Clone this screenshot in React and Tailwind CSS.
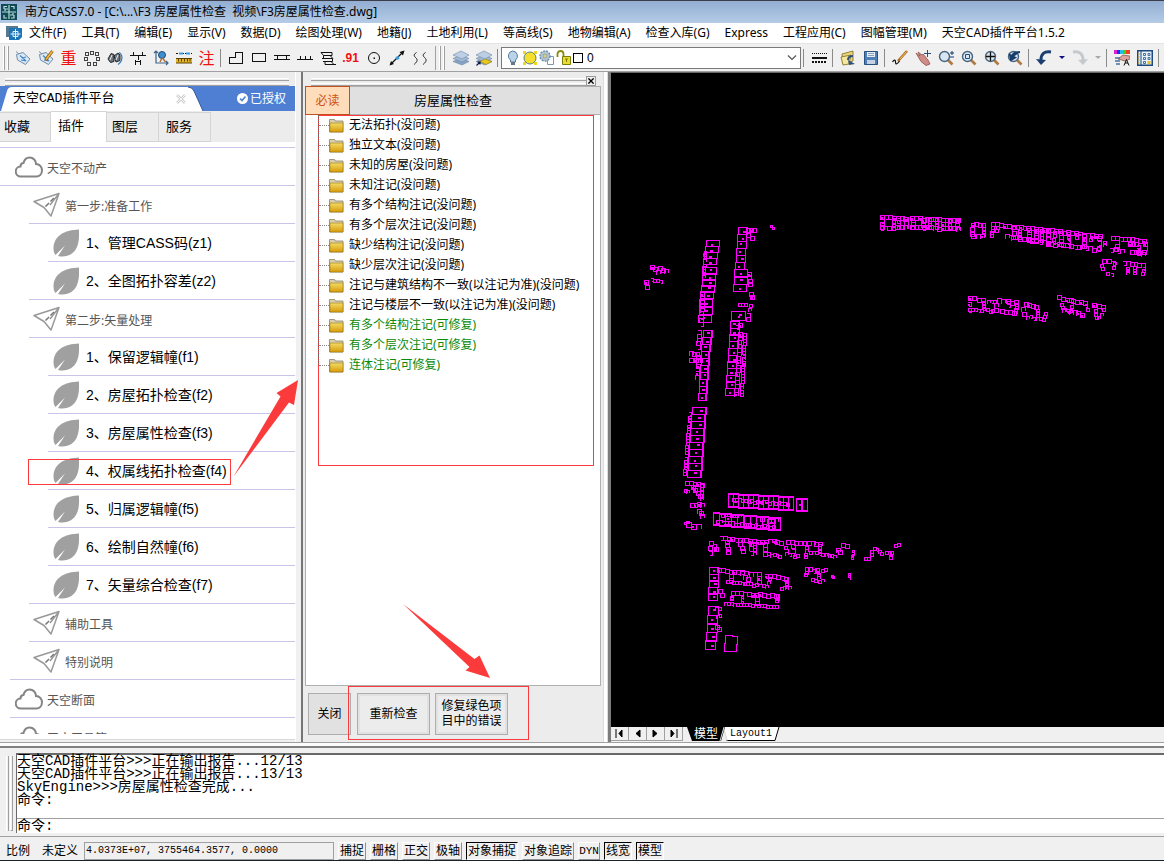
import React from "react";

/* ---------- Menu, tree and plug-in data ---------- */

const MENUS = [
  "文件(F)", "工具(T)", "编辑(E)", "显示(V)", "数据(D)", "绘图处理(W)", "地籍(J)", "土地利用(L)",
  "等高线(S)", "地物编辑(A)", "检查入库(G)", "Express", "工程应用(C)", "图幅管理(M)", "天空CAD插件平台1.5.2",
];

const CHECKS = [
  ["无法拓扑(没问题)", false],
  ["独立文本(没问题)", false],
  ["未知的房屋(没问题)", false],
  ["未知注记(没问题)", false],
  ["有多个结构注记(没问题)", false],
  ["有多个层次注记(没问题)", false],
  ["缺少结构注记(没问题)", false],
  ["缺少层次注记(没问题)", false],
  ["注记与建筑结构不一致(以注记为准)(没问题)", false],
  ["注记与楼层不一致(以注记为准)(没问题)", false],
  ["有多个结构注记(可修复)", true],
  ["有多个层次注记(可修复)", true],
  ["连体注记(可修复)", true],
];

const LINE0 = "h-px bg-[#c8c5e8]";
const LINE10 = "h-px bg-[#c8c5e8] ml-[10px]";
const LINE29 = "h-px bg-[#c8c5e8] ml-[29px]";
const LINE48 = "h-px bg-[#c8c5e8] ml-[48px]";

const PLUGINS = [
  ["cloud", "天空不动产", LINE0],
  ["plane", "第一步:准备工作", LINE29],
  ["leaf", "1、管理CASS码(z1)", LINE48],
  ["leaf", "2、全图拓扑容差(z2)", LINE29],
  ["plane", "第二步:矢量处理", LINE29],
  ["leaf", "1、保留逻辑幢(f1)", LINE48],
  ["leaf", "2、房屋拓扑检查(f2)", LINE48],
  ["leaf", "3、房屋属性检查(f3)", LINE48],
  ["leaf", "4、权属线拓扑检查(f4)", LINE48, true],
  ["leaf", "5、归属逻辑幢(f5)", LINE48],
  ["leaf", "6、绘制自然幢(f6)", LINE48],
  ["leaf", "7、矢量综合检查(f7)", LINE29],
  ["plane", "辅助工具", LINE29],
  ["plane", "特别说明", LINE10],
  ["cloud", "天空断面", LINE10],
  ["cloud", "天空工具箱", LINE10],
];

/* ---------- Site plan geometry ---------- */

let seed = 7;
const rnd = () => {
  seed = (seed * 16807) % 2147483647;
  return seed / 2147483647;
};

const rect = (x, y, w, h) => `M${x} ${y}h${w}v${h}h${-w}z`;
const dot = (x, y, w = 2, h = 2) => rect(x, y, w, h);

// Long blocks cut in parcels: [x1, y1, x2, y2, cellWidth, cellHeight, doubleWall]
const BLOCKS = [
  [706, 240, 703, 258, 13, 6, false],
  [703, 267, 701, 285, 13, 7, false],
  [700, 291, 698, 315, 13, 7, false],
  [703, 330, 701, 344, 9, 7, true],
  [701, 351, 698, 393, 8, 7, true],
  [692, 407, 687, 470, 14, 7, true],
  [738, 227, 735, 262, 9, 7, false],
  [734, 269, 733, 284, 13, 7, false],
  [731, 311, 731, 311, 14, 9, false],
  [730, 321, 725, 388, 9, 7, false],
  [728, 493, 788, 496, 5, 14, true],
  [796, 498, 802, 498, 5, 13, true],
  [713, 512, 774, 517, 6, 13, true],
  [708, 606, 705, 640, 10, 9, false],
  [709, 567, 708, 593, 9, 7, false],
];

// Chains of small outbuildings: [x1, y1, x2, y2, size]
const CHAINS = [
  [703, 250, 702, 275, 3], [700, 292, 699, 322, 4], [697, 330, 696, 345, 4], [689, 351, 695, 352, 4],
  [689, 358, 698, 358, 4], [696, 355, 695, 375, 4],
  [688, 412, 683, 472, 3], [685, 481, 700, 482, 4], [691, 485, 698, 494, 4], [684, 489, 686, 489, 3],
  [690, 503, 700, 502, 4], [697, 508, 700, 514, 4], [684, 521, 687, 521, 2], [686, 522, 696, 523, 5], [700, 484, 700, 497, 3],
  [746, 228, 752, 228, 4], [746, 233, 750, 236, 4], [747, 272, 748, 282, 4], [749, 292, 750, 295, 4],
  [738, 303, 744, 303, 3], [749, 304, 748, 308, 3], [746, 313, 746, 317, 4], [738, 322, 735, 325, 4],
  [738, 332, 734, 392, 4], [743, 333, 740, 392, 3],
  [650, 265, 656, 269, 4], [658, 266, 664, 269, 4], [644, 280, 645, 284, 4], [650, 278, 659, 280, 3], [770, 225, 772, 227, 2],
  [880, 215, 904, 216, 4], [879, 226, 903, 225, 4], [880, 219, 880, 225, 4], [892, 217, 892, 226, 3], [897, 217, 897, 226, 3], [903, 217, 904, 225, 4],
  [910, 216, 956, 218, 4], [910, 225, 956, 226, 4], [911, 219, 911, 225, 4], [921, 218, 921, 226, 4], [928, 218, 928, 226, 3],
  [935, 218, 935, 226, 3], [941, 218, 941, 226, 4], [948, 219, 948, 226, 3], [955, 219, 955, 226, 4],
  [971, 222, 981, 223, 4], [971, 234, 980, 234, 4], [970, 227, 970, 232, 4], [982, 227, 982, 232, 3],
  [991, 222, 1046, 228, 4], [1046, 228, 1098, 234, 4], [1005, 234, 1030, 238, 4], [1030, 239, 1096, 247, 4],
  [991, 226, 990, 234, 3], [996, 226, 995, 229, 3], [1012, 226, 1011, 235, 4], [1018, 226, 1018, 235, 3], [1027, 227, 1027, 237, 4],
  [1034, 228, 1034, 238, 4], [1040, 229, 1040, 239, 3], [1046, 229, 1046, 240, 4], [1053, 231, 1052, 241, 3], [1059, 231, 1059, 242, 4],
  [1067, 232, 1067, 243, 3], [1075, 233, 1075, 236, 3], [1082, 234, 1082, 244, 4], [1089, 235, 1089, 238, 3], [1097, 236, 1097, 245, 4], [1103, 240, 1103, 243, 3],
  [1111, 236, 1142, 238, 4], [1115, 240, 1114, 247, 4], [1109, 248, 1120, 249, 4], [1128, 242, 1134, 242, 4], [1136, 244, 1136, 250, 4], [1143, 242, 1142, 250, 4], [1130, 250, 1141, 251, 4],
  [1102, 258, 1111, 260, 4], [1100, 264, 1101, 267, 3], [1113, 262, 1112, 266, 3], [1106, 272, 1110, 273, 3],
  [1122, 261, 1141, 263, 4], [1126, 266, 1126, 271, 3], [1133, 266, 1133, 271, 3], [1142, 266, 1141, 272, 3],
  [968, 296, 981, 297, 4], [967, 302, 967, 307, 4], [968, 308, 980, 308, 3], [982, 301, 982, 307, 3], [987, 299, 993, 300, 3], [986, 308, 991, 309, 3],
  [997, 298, 1014, 300, 4], [994, 303, 994, 308, 4], [1000, 309, 1012, 311, 4], [1007, 301, 1007, 304, 3], [1015, 303, 1014, 311, 3],
  [1024, 302, 1034, 305, 4], [1021, 307, 1022, 312, 4], [1026, 315, 1042, 317, 3], [1036, 308, 1036, 314, 3], [1044, 312, 1043, 315, 3],
  [1057, 295, 1069, 298, 4], [1071, 299, 1083, 301, 4], [1060, 303, 1062, 308, 3], [1062, 308, 1080, 312, 4], [1070, 302, 1069, 308, 3], [1084, 304, 1086, 307, 3],
  [1092, 303, 1101, 305, 4], [1094, 309, 1094, 313, 3], [1102, 308, 1100, 312, 3], [1095, 315, 1097, 316, 3],
  [732, 498, 786, 502, 3], [721, 513, 738, 514, 3], [760, 517, 774, 518, 4], [716, 520, 772, 525, 3],
  [709, 541, 714, 547, 4], [708, 546, 708, 551, 4], [719, 536, 738, 538, 4], [740, 538, 764, 540, 4], [768, 539, 779, 540, 4],
  [725, 540, 726, 550, 4], [738, 542, 741, 549, 4], [749, 542, 749, 550, 4], [753, 542, 753, 551, 3], [763, 542, 763, 551, 4], [767, 552, 778, 554, 3],
  [786, 540, 802, 541, 4], [803, 541, 818, 541, 4], [784, 546, 785, 549, 3], [791, 544, 791, 548, 4], [785, 552, 796, 554, 3],
  [805, 546, 804, 555, 3], [809, 551, 824, 552, 3], [825, 553, 833, 555, 3], [818, 543, 818, 549, 3], [836, 548, 838, 550, 4], [841, 542, 845, 544, 4],
  [852, 550, 851, 557, 2], [864, 557, 867, 557, 3], [870, 550, 870, 553, 3], [873, 546, 880, 551, 3], [885, 551, 890, 551, 3], [889, 554, 889, 556, 3], [894, 544, 897, 543, 3],
  [717, 568, 740, 570, 4], [740, 570, 757, 572, 4], [729, 574, 729, 578, 4], [743, 575, 746, 577, 4], [757, 576, 757, 579, 4], [726, 580, 755, 583, 3],
  [764, 573, 784, 576, 4], [768, 577, 767, 581, 3], [762, 584, 765, 585, 3], [784, 577, 785, 582, 3], [780, 586, 788, 586, 3],
  [805, 567, 815, 568, 4], [805, 571, 804, 573, 3], [821, 568, 824, 568, 3], [816, 570, 817, 576, 3], [811, 578, 821, 579, 3], [831, 574, 832, 576, 2], [848, 573, 848, 576, 2],
  [731, 591, 774, 593, 4], [730, 596, 730, 597, 3], [741, 596, 741, 600, 2], [755, 597, 755, 600, 4], [776, 594, 775, 599, 3],
  [724, 602, 775, 605, 3], [715, 607, 718, 607, 3], [716, 614, 718, 614, 3], [715, 625, 717, 627, 4], [718, 589, 720, 593, 4],
];

function buildPlan() {
  let outline = "";
  let solid = "";
  for (const [x1, y1, x2, y2, w, h, double] of BLOCKS) {
    const vertical = Math.abs(y2 - y1) >= Math.abs(x2 - x1);
    const n = Math.max(1, Math.round(Math.hypot(x2 - x1, y2 - y1) / (vertical ? h : w)));
    for (let i = 0; i <= n; i++) {
      const x = Math.round(x1 + ((x2 - x1) * i) / n);
      const y = Math.round(y1 + ((y2 - y1) * i) / n);
      outline += rect(x, y, w, h);
      if (double && vertical) solid += dot(x + w - 1, y, 1, h);
      if (double && !vertical) solid += dot(x, y + 1, w, 1) + dot(x, y + h - 1, w, 1);
      const dx = x + Math.floor(w / 2) + Math.floor(rnd() * 3) - 1;
      const dy = y + Math.floor(h / 2) + Math.floor(rnd() * 3) - 1;
      if (vertical || rnd() > 0.5) solid += dot(dx, dy, rnd() > 0.5 ? 3 : 2, 2);
    }
  }
  for (const [x1, y1, x2, y2, s] of CHAINS) {
    const len = Math.hypot(x2 - x1, y2 - y1);
    const n = Math.max(1, Math.round(len / s));
    for (let i = 0; i <= n; i++) {
      const x = Math.round(x1 + ((x2 - x1) * i) / n);
      const y = Math.round(y1 + ((y2 - y1) * i) / n + (rnd() > 0.8 ? 1 : 0));
      const r = rnd();
      if (r < 0.66) outline += rect(x, y, s, s);
      else if (r < 0.86) outline += `M${x} ${y + s}v${-s}h${s}v${s - 1}`;
      else outline += `M${x} ${y}h${s}v${s}h${-s + 1}`;
      if (s > 3 && rnd() > 0.8) solid += dot(x + 1, y + 2, 2, 2);
    }
  }
  outline += "M725 635h7v1h5v8h-1v7h-12v-8h1z";
  return [outline, solid];
}

const [PLAN_OUTLINE, PLAN_SOLID] = buildPlan();

/* ---------- Icons ---------- */

function Svg({ children, size = "size-4", box = "0 0 16 16" }) {
  return (
    <svg viewBox={box} className={`${size} shrink-0`} fill="none" aria-hidden="true">
      {children}
    </svg>
  );
}

const Tag = () => (
  <g>
    <path d="M1 1.500 4 4" stroke="#7a8aa0" />
    <path d="M1.500 4.500 8 2.500 15 9 10.500 14.500 2.500 10z" fill="#dce8f4" stroke="#6e8cae" />
    <path d="M5 5.500 11 11M7 8l4-1M6 10l5 1" stroke="#3f88c8" strokeWidth="1.200" />
  </g>
);

const Lens = ({ children }) => (
  <g>
    <path d="M10 10 14.500 14.500" stroke="#b07a40" strokeWidth="2.600" />
    <circle cx="6.500" cy="6.500" r="5" fill="#d7e6f2" stroke="#4a647c" strokeWidth="1.400" />
    {children}
  </g>
);

const Layers = () => (
  <g stroke="#7088a8" strokeWidth=".6">
    <path d="M0 11.500 8 8l8 3.500L9 15z" fill="#86a2c4" />
    <path d="M0 8.500 8 5l8 3.500L9 12z" fill="#a0bad6" />
    <path d="M0 5 8 1l8 4-7 4z" fill="#bccfe4" />
  </g>
);

const ICONS = {
  tag: <Tag />,
  tagEdit: (
    <g>
      <Tag />
      <path d="M14.500 1 7.500 10" stroke="#8a5a20" strokeWidth="3" />
      <path d="M14.500 1 8 9.500" stroke="#f0b840" strokeWidth="1.600" />
    </g>
  ),
  nodes: (
    <path d="M6.500 1.500h3v3h-3zM1.500 2.500h3v3h-3zM11.500 2.500h3v3h-3zM.5 7.500h3v3h-3zM12.500 7.500h3v3h-3zM3.500 12.500h3v3h-3zM9.500 12.500h3v3h-3z" stroke="#444" shapeRendering="crispEdges" />
  ),
  binoculars: (
    <g>
      <path d="M1 9 4 3.500l3 1v7l-3.500 1zM7 6l4-3 2 2v5.500L9 12z" fill="#6d767d" stroke="#22282d" />
      <path d="M12 2.500c4 2 4 8.500-1 12" stroke="#3f7cb8" strokeWidth="1.300" />
      <path d="M3 10 5 5M9 10l2-5" stroke="#e8ecef" />
    </g>
  ),
  ditch: <path d="M0 5.500h16M3.500 2v3M12.500 2v3M8.500 6v4M5.500 15V9.500M10.500 15V9.500M5.500 11.500h5" stroke="#111" shapeRendering="crispEdges" />,
  axes: (
    <g>
      <path d="M3 1v12h12M1 3l2-2 2 2M13 11l2 2-2 2" stroke="#39648f" strokeWidth="1.200" />
      <circle cx="9" cy="5" r="3.500" fill="#3f8fd0" stroke="#1f4a74" />
      <path d="m9 8-2 4M9.500 8l3 4" stroke="#b06a30" strokeWidth="1.400" />
    </g>
  ),
  ruler: (
    <g>
      <path d="M0 3.500h16" stroke="#111" strokeDasharray="2 1" />
      <path d="M3 3.500h4M10 3.500h4" stroke="#3c9be0" strokeWidth="2" />
      <path d="M0 8h16v5H0z" fill="#e3b52a" />
      <path d="M0 8.500h16M0 13h16M2.500 9v2.500M5.500 9v2.500M8.500 9v2.500M11.500 9v2.500M14 9v2.500" stroke="#5c4300" />
    </g>
  ),
  poly: <path d="M1.500 13.500v-6h6v-5h7v11z" stroke="#111" shapeRendering="crispEdges" />,
  box: <path d="M1.500 3.500h13v8h-13z" stroke="#111" shapeRendering="crispEdges" />,
  fence: <path d="M0 5.500h16M0 9.500h16M3.500 5v4M12.500 5v4" stroke="#111" shapeRendering="crispEdges" />,
  slope: <path d="M0 9.500h16M3.500 6v3M8.500 6v3M13.500 6v3" stroke="#111" shapeRendering="crispEdges" />,
  contour: <path d="M1 2.500h11v3H3.500v3h9v3H5v3h11M10 5.500l3 3M11 11.500l3 3M1 2.500l2.500 3M2 8.500h2M3 11.500h2" stroke="#111" />,
  circle: (
    <g>
      <circle cx="8" cy="8" r="5.500" stroke="#111" />
      <path d="M7.500 7.500h1.500v1.500H7.500z" fill="#111" />
    </g>
  ),
  dimension: (
    <g>
      <path d="M1.500 14.500 14.500 1.500" stroke="#111" strokeWidth="1.300" />
      <path d="m15.500.5-5 1.500L14 5.500zM.5 15.500 2 11l3 3z" fill="#111" />
      <path d="m6.500 7 3-1 1 3-3 1z" fill="#3c9be0" />
    </g>
  ),
  waves: <path d="M4.500 2.500c-4 2.500-2 4 0 6 1.500 2 0 4-2.500 6M13.500 2.500c-4 2.500-2 4 0 6 1.500 2 0 4-2.500 6" stroke="#222" />,
  layers: <Layers />,
  layerPrev: (
    <g>
      <Layers />
      <path d="M4 11.500 9 9l7 2.500-6 3z" fill="#e8c81c" stroke="#9a8408" strokeWidth=".6" />
      <path d="M.5 15.500 4 12M1.500 12H4v2.500" stroke="#0a1a4a" strokeWidth="1.200" />
    </g>
  ),
  lineStyle: (
    <g stroke="#111">
      <path d="M1 3.500h15" strokeDasharray="1 1" />
      <path d="M1 8h15" strokeWidth="2" />
      <path d="M1 12h15" strokeWidth="2" strokeDasharray="2 1" />
    </g>
  ),
  open: (
    <g>
      <path d="M2 4 13 1v10L3 14z" fill="#e9d67c" stroke="#958032" />
      <path d="m1 7 10-2-2 9-6 1z" fill="#f4e7a0" stroke="#958032" />
      <path d="M13 6C9 6 8 8 8 10" stroke="#2d4f7c" strokeWidth="2" />
      <path d="m8 10 1 5 6-1z" fill="#2d4f7c" />
    </g>
  ),
  save: (
    <g>
      <path d="M1.500 1.500h13v13h-13z" fill="#4f7fb8" stroke="#2b517e" />
      <path d="M4 2h8v5H4z" fill="#e6eef6" />
      <path d="M4 10h8v4H4z" fill="#c4d2e2" />
      <path d="M5 3.500h6M5 5.500h6" stroke="#8aa0b8" />
    </g>
  ),
  brush: (
    <g>
      <path d="M15 1 6 11" stroke="#b06a20" strokeWidth="2.600" />
      <path d="M14.500 1.500 8 9" stroke="#f2c060" />
      <path d="M.5 12c1-2 3-3 3 0 0 3 2 2 4-1" stroke="#111" strokeWidth="1.200" />
    </g>
  ),
  pan: (
    <g>
      <path d="M1 3 5 6 3 2l4 3 1-1 5 6 2 4-4 1.500-5-4z" fill="#d08c86" stroke="#8e504c" strokeWidth=".8" />
      <path d="M12.500 0v7M9 3.500h7" stroke="#234f80" />
    </g>
  ),
  zoomPm: (
    <g>
      <Lens />
      <path d="M12 3h4M14 1v4M12 7h4" stroke="#123c70" />
    </g>
  ),
  zoomWin: (
    <Lens>
      <path d="M4.500 4.500h4v4h-4z" stroke="#234f80" />
    </Lens>
  ),
  zoomExt: (
    <Lens>
      <path d="M6.500 2v9M2 6.500h9" stroke="#111" strokeWidth="1.300" />
    </Lens>
  ),
  zoomPrev: (
    <g>
      <Lens />
      <path d="M5 8c0-4 3-6 8-6M3 5l1 5 4-2.500z" fill="#183d6c" stroke="#183d6c" strokeWidth="2" />
    </g>
  ),
  undo: (
    <g>
      <path d="M15 2C8 1 5 4 5 10" stroke="#1c3f70" strokeWidth="3" />
      <path d="m0 9 5 6 5-5z" fill="#1c3f70" />
    </g>
  ),
  redo: (
    <g>
      <path d="M1 2c7-1 10 2 10 8" stroke="#c6c9cc" strokeWidth="3" />
      <path d="m16 9-5 6-5-5z" fill="#c6c9cc" />
    </g>
  ),
  props: (
    <g>
      <path d="M0 0h3v4H0z" fill="#e020d0" />
      <path d="M3 0h3v4H3z" fill="#2030f0" />
      <path d="M6 0h3v4H6z" fill="#20c0e0" />
      <path d="M9 0h3v4H9z" fill="#40d020" />
      <path d="M12 0h4v4h-4z" fill="#f04020" />
      <path d="m4 9 5-4 7 1v3l-5 2z" fill="#dca49c" stroke="#7a4a44" strokeWidth=".7" />
      <path d="M1 8h5M1 11h5M2 14h4" stroke="#4a70a0" strokeWidth="1.500" />
      <path d="m10 15.500 2.500-6 2.500 6M11 13h3" stroke="#111" />
    </g>
  ),
  palette: (
    <g>
      <path d="M.75.75h14.500v14.500H.75z" fill="#e8f0f8" stroke="#1d4a80" strokeWidth="1.500" />
      <path d="M4 1v14" stroke="#1d4a80" />
      <path d="M2 3v11" stroke="#d8b030" strokeDasharray="2 1" />
      <path d="M6.500 3.500h2v2h-2zM11 3.500h2v2h-2zM6.500 7.500h2v2h-2zM11 7.500h2v2h-2zM6.500 11.500h2v2h-2z" stroke="#45709c" />
      <path d="M10.500 11h3v3h-3z" fill="#e0c030" />
    </g>
  ),
};

function Tool({ name, label }) {
  return (
    <button type="button" aria-label={label} className="flex h-6 w-[23px] shrink-0 items-center justify-center">
      <Svg>{ICONS[name]}</Svg>
    </button>
  );
}

const Sep = () => <span className="mr-[3px] ml-[2px] h-[18px] w-px shrink-0 bg-[#8a8a8a]" />;

function Grip() {
  return (
    <span className="flex h-6 shrink-0 gap-[2px]">
      <span className="w-[2px] border-r border-[#a0a0a0] bg-white" />
      <span className="w-[2px] border-r border-[#a0a0a0] bg-white" />
    </span>
  );
}

const Caret = ({ tone }) => (
  <svg viewBox="0 0 6 4" className={`h-1 w-[6px] ${tone}`} aria-hidden="true">
    <path d="M0 0h6L3 3z" fill="currentColor" />
  </svg>
);

function PluginIcon({ kind }) {
  if (kind === "cloud")
    return (
      <svg viewBox="0 0 28 22" className="ml-[15px] h-[22px] w-7 shrink-0" fill="none" aria-hidden="true">
        <path d="M6 20.500a5 5 0 0 1-.5-10C5.500 8 7 7 8.500 7 9.500 3 12 1.500 14.500 1.500c4 0 6.500 3 6.500 6.500 3.500 0 6 3 6 6.500s-2.500 6-5.500 6z" stroke="#858585" strokeWidth="2" />
      </svg>
    );
  if (kind === "plane")
    return (
      <svg viewBox="0 0 28 25" className="ml-[33px] h-[25px] w-7 shrink-0" fill="none" aria-hidden="true">
        <path d="M1 9.500 26 1.500 18 24 11 15.500zM26 1.500 17 13" stroke="#999" strokeWidth="1.500" strokeLinejoin="round" />
        <path d="m21 6-9 9" stroke="#777" strokeWidth="1.500" strokeDasharray="5 2" />
      </svg>
    );
  return (
    <svg viewBox="0 0 27 28" className="ml-[53px] h-7 w-[27px] shrink-0" aria-hidden="true">
      <path d="M26 .5C11 1 1 7 .5 19c0 3 .5 5 2 7L12 16.500 5 27c9 2 16-2 19-9 2.500-6 2-11 2-17.500z" fill="#a0a0a0" />
    </svg>
  );
}

function Folder() {
  return (
    <svg viewBox="0 0 15 15" className="h-[15px] w-[15px] shrink-0" aria-hidden="true">
      <defs>
        <linearGradient id="folderFill" x1="0" y1="0" x2="0" y2="1">
          <stop offset="0" stopColor="#f2dc68" />
          <stop offset="1" stopColor="#d89a08" />
        </linearGradient>
      </defs>
      <path d="M.5 14V1.500h5l1 1.500H14v11z" fill="#d8cfb0" stroke="#8c8266" strokeWidth=".8" />
      <path d="M1 5h13v9H1z" fill="url(#folderFill)" stroke="#a07810" strokeWidth=".6" />
    </svg>
  );
}

/* ---------- Panels ---------- */

function TitleBar() {
  return (
    <header className="flex h-[23px] shrink-0 items-center border-t border-[#3a3f4a] bg-linear-to-b from-[#93aed2] to-[#b4cce6]">
      <svg viewBox="0 0 16 16" className="mr-2 ml-px size-4" aria-hidden="true">
        <path d="M0 0h16v16H0z" fill="#0f4a55" />
        <path d="M8 1v14M1 8h14M3 5V2.500h3M13 5V2.500h-3M3 11v3h3M13 11v3h-3M4 7V5h3M12 9v2H9" fill="none" stroke="#b8dcdc" strokeWidth="1.200" />
      </svg>
      <h1 className="text-[12px] leading-4 whitespace-pre">南方CASS7.0 - [C:\...\F3 房屋属性检查  视频\F3房屋属性检查.dwg]</h1>
    </header>
  );
}

function MenuBar() {
  return (
    <nav className="flex h-5 shrink-0 items-center bg-white text-[12px] leading-4 whitespace-nowrap">
      <svg viewBox="0 0 16 16" className="mr-[7px] ml-[6px] size-4 shrink-0" aria-hidden="true">
        <path d="M0 1h12v11H0z" fill="#587890" />
        <path d="M3 3h13v9l-3 3H3z" fill="#1b75b8" />
        <path d="M9.500 4v10M4.500 9h10M7 6.500h5v5H7z" fill="none" stroke="#e0f2ff" />
      </svg>
      <div className="flex gap-[15px]">
        {MENUS.map((m) => (
          <button type="button" key={m}>{m}</button>
        ))}
      </div>
    </nav>
  );
}

function LayerSelect() {
  return (
    <div className="relative h-[22px] w-[300px] shrink-0">
      <select aria-label="图层" className="block h-[22px] w-full appearance-none rounded-none border border-[#7a7a7a] bg-white pl-[85px] font-[Liberation_Sans,sans-serif] text-[12px] leading-5" defaultValue="0">
        <option>0</option>
      </select>
      <div className="pointer-events-none absolute inset-y-0 left-1 flex items-center gap-px">
        <Svg>
          <path d="M7.500 1a5 5 0 0 1 3 9v2h-5v-2a5 5 0 0 1 2-9z" fill="#b9d4ea" stroke="#5c7c98" />
          <path d="M6 12h4v3H6z" fill="#6c7680" />
        </Svg>
        <Svg>
          <path d="M1 1h3v3H1zM12 1h3v3h-3zM1 12h3v3H1zM12 12h3v3h-3z" fill="#f0d820" />
          <circle cx="8" cy="8" r="6" fill="#f4e02c" stroke="#5c8080" />
        </Svg>
        <Svg>
          <path d="M8.500 6.500h6v8h-6z" fill="#fff" stroke="#7f98b0" />
          <circle cx="6" cy="6" r="5" fill="#b4c6cc" stroke="#7090b0" strokeWidth="1.500" strokeDasharray="2 1" />
          <circle cx="6" cy="6" r="2" fill="#d8d080" stroke="#7090b0" strokeWidth=".6" />
        </Svg>
        <Svg>
          <path d="M1.500 7V4c0-4 6-4 6 0v3" stroke="#8a8c10" strokeWidth="1.800" />
          <path d="M6.500 6.500h8v8h-8z" fill="#e8dc30" stroke="#7c7c08" />
          <path d="M9 9h3M10.500 9v3" stroke="#7c7c08" />
        </Svg>
        <span className="size-[10px] border border-black bg-white" />
      </div>
      <svg viewBox="0 0 10 6" className="pointer-events-none absolute top-2 right-[4px] h-[6px] w-[10px]" fill="none" aria-hidden="true">
        <path d="m1 .5 4 4 4-4" stroke="#555" strokeWidth="1.200" />
      </svg>
    </div>
  );
}

function Toolbar() {
  const red = "flex h-6 w-[23px] shrink-0 items-center justify-center text-[16px] leading-none text-[#f01010]";
  return (
    <div className="flex h-[29px] shrink-0 items-center overflow-hidden border-t border-b border-t-[#e4e4e4] border-b-[#a0a0a0] bg-[#f0f0f0]">
      <div className="flex w-[436px] shrink-0 items-center border-r border-[#a0a0a0] pl-[3px]">
        <Grip />
        <span className="w-[2px]" />
        <Tool name="tag" label="标签" />
        <Tool name="tagEdit" label="编辑标签" />
        <button type="button" className={red}>重</button>
        <Tool name="nodes" label="节点" />
        <Tool name="binoculars" label="查找" />
        <Tool name="ditch" label="陡坎" />
        <Tool name="axes" label="坐标查询" />
        <Tool name="ruler" label="量距" />
        <button type="button" className={red}>注</button>
        <Sep />
        <Tool name="poly" label="多点房屋" />
        <Tool name="box" label="四点房屋" />
        <Tool name="fence" label="围墙" />
        <Tool name="slope" label="斜坡" />
        <Tool name="contour" label="等高线" />
        <button type="button" className="flex w-[23px] shrink-0 justify-center font-[Liberation_Sans,sans-serif] text-[12px] font-bold text-[#f01010]">.91</button>
        <Tool name="circle" label="圆" />
        <Tool name="dimension" label="标注" />
        <Tool name="waves" label="曲线" />
      </div>
      <div className="flex flex-1 items-center pl-[3px]">
        <Grip />
        <span className="w-[4px]" />
        <Tool name="layers" label="图层管理" />
        <Tool name="layerPrev" label="上一图层" />
        <Sep />
        <LayerSelect />
        <Sep />
        <Tool name="lineStyle" label="线型" />
        <Sep />
        <Tool name="open" label="打开" />
        <Tool name="save" label="保存" />
        <Sep />
        <Tool name="brush" label="重画" />
        <Tool name="pan" label="平移" />
        <Tool name="zoomPm" label="实时缩放" />
        <Tool name="zoomWin" label="窗口缩放" />
        <Tool name="zoomExt" label="范围缩放" />
        <Tool name="zoomPrev" label="前图" />
        <Sep />
        <Tool name="undo" label="放弃" />
        <button type="button" aria-label="放弃列表" className="flex w-[13px] justify-center"><Caret tone="text-[#101080]" /></button>
        <Tool name="redo" label="重做" />
        <button type="button" aria-label="重做列表" className="flex w-[13px] justify-center"><Caret tone="text-[#a8a8a8]" /></button>
        <Sep />
        <Tool name="props" label="特性" />
        <Tool name="palette" label="工具选项板" />
        <Sep />
      </div>
    </div>
  );
}

function GripBars() {
  return (
    <div className="flex flex-1 flex-col gap-[2px]">
      <span className="h-[3px] border-t border-b border-t-white border-b-[#a0a0a0]" />
      <span className="h-[3px] border-t border-b border-t-white border-b-[#a0a0a0]" />
    </div>
  );
}

function PluginPanel() {
  const tab = "h-[30px] self-end border-t border-r border-b border-[#d4d4d4] text-left whitespace-nowrap";
  return (
    <aside className="flex w-[303px] shrink-0 border-r-2 border-[#767676] bg-[#f0f0f0]">
      <div className="flex min-w-0 flex-1 flex-col">
        <div className="flex h-[14px] shrink-0 items-end bg-[#ececec] pr-[6px] pl-[5px]">
          <GripBars />
        </div>
        <div className="flex h-[25px] shrink-0 items-center justify-between bg-[#4f7fd2] pr-[9px]">
          <div className="relative flex h-full w-[204px] items-center">
            <svg viewBox="0 0 204 25" className="absolute inset-0 h-full w-full" aria-hidden="true">
              <path d="M1 25 7 5Q8 1 12 1H188Q192 1 194 5L203 25z" fill="#fff" />
              <path d="M188 1Q192 1 194 5L203 25" fill="none" stroke="#34599a" />
            </svg>
            <span className="relative pl-[13px] font-[Liberation_Mono,Noto_Sans_CJK_SC,monospace] text-[13px]">天空CAD插件平台</span>
            <button type="button" aria-label="关闭标签" className="relative mr-[18px] ml-auto">
              <svg viewBox="0 0 10 10" className="size-[10px]" aria-hidden="true">
                <path d="m1 1 8 8M9 1 1 9" stroke="#cfcfcf" strokeWidth="2.500" />
                <path d="m1 1 8 8M9 1 1 9" stroke="#f6f6f6" />
              </svg>
            </button>
          </div>
          <span className="flex items-center gap-[2px] text-[12px] text-white">
            <svg viewBox="0 0 11 11" className="size-[11px]" aria-hidden="true">
              <circle cx="5.500" cy="5.500" r="5.500" fill="#fff" />
              <path d="m3 5.500 2 2 3.500-4" fill="none" stroke="#4f7fd2" strokeWidth="1.600" />
            </svg>
            已授权
          </span>
        </div>
        <div className="flex h-[31px] shrink-0 items-center bg-[#ececec] text-[13px]" role="tablist">
          <button type="button" role="tab" className={`${tab} w-[51px] pl-1`}>收藏</button>
          <button type="button" role="tab" aria-selected="true" className="h-full w-14 border-t border-r border-[#d4d4d4] bg-white pb-[2px] pl-[7px] text-left">插件</button>
          <button type="button" role="tab" className={`${tab} w-[52px] pl-[5px]`}>图层</button>
          <button type="button" role="tab" className={`${tab} w-[52px] pl-[7px]`}>服务</button>
        </div>
        <div className="min-h-0 flex-1 overflow-hidden bg-white pt-[5px]">
          <div className={LINE0} />
          <ul className="h-[586px] overflow-hidden">
            {PLUGINS.map(([kind, name, line, marked]) => (
              <li key={name}>
                <div className="relative flex h-[37px] items-center">
                  {marked && <span className="absolute top-[7px] left-7 h-[26px] w-[203px] border border-[#fb3b3b]" />}
                  <PluginIcon kind={kind} />
                  {kind === "leaf" ? (
                    <button type="button" className="ml-[6px] pt-[2px] font-[Liberation_Sans,Noto_Sans_CJK_SC,sans-serif] text-[14px]">{name}</button>
                  ) : (
                    <button type="button" className="ml-[4px] pt-1 text-[12px] text-[#555]">{name}</button>
                  )}
                </div>
                <div className={line} />
              </li>
            ))}
          </ul>
        </div>
        <div className="h-[3px] shrink-0 border-t border-[#d8d8d8]" />
      </div>
      <div className="w-[6px] border-l border-white" />
    </aside>
  );
}

function CheckPanel() {
  const btn = "relative mt-[7px] h-[42px] border border-[#adadad] pb-[2px] text-[12px] leading-[15px]";
  return (
    <section className="flex w-[308px] shrink-0 border-r-[3px] border-[#7c7c7c] bg-[#ececec] pl-[2px]">
      <div className="flex min-w-0 flex-1 flex-col">
        <div className="flex h-[14px] shrink-0 items-end pr-[7px] pl-[6px]">
          <GripBars />
          <button type="button" aria-label="关闭面板" className="flex size-[10px] items-center justify-center border border-[#999] bg-[#f0f0f0]">
            <svg viewBox="0 0 7 7" className="size-[6px]" aria-hidden="true">
              <path d="m.5.5 6 6M6.500.5l-6 6" stroke="#000" strokeWidth="1.600" />
            </svg>
          </button>
        </div>
        <div className="flex h-[29px] shrink-0 pr-[2px]">
          <button type="button" className="w-[45px] border border-[#c1501c] bg-[#ffdcba] text-[12px] text-[#cf5210]">必读</button>
          <h2 className="flex flex-1 items-center border border-l-0 border-[#b0b0b0] bg-[#e0e0e0] pl-16 text-[13px] font-normal">房屋属性检查</h2>
        </div>
        <div className="mr-[2px] min-h-0 flex-1 border border-t-0 border-[#b0b0b0] bg-white pr-[6px] pl-3">
          <ul className="h-[351px] text-[12px] leading-5 shadow-[inset_0_0_0_1px_#fb3b3b]">
            {CHECKS.map(([label, fixable], i) => (
              <li key={label} className="flex h-5 items-center">
                <span className={i === CHECKS.length - 1 ? "h-[10px] self-start border-l border-dotted border-[#666]" : "h-5 border-l border-dotted border-[#666]"} />
                <span className="w-[10px] border-t border-dotted border-[#888]" />
                <Folder />
                <span className={fixable ? "ml-[5px] text-[#0a8a0a]" : "ml-[5px] text-black"}>{label}</span>
              </li>
            ))}
          </ul>
        </div>
        <div className="relative flex h-14 shrink-0 pl-[3px]">
          <button type="button" className={`${btn} w-[43px] bg-[#e1e1e1]`}>关闭</button>
          <button type="button" className={`${btn} ml-[6px] w-[73px] bg-[#ececec] shadow-[inset_0_0_0_2px_#e1e1e1]`}>重新检查</button>
          <button type="button" className={`${btn} ml-[5px] w-[73px] bg-[#ececec] shadow-[inset_0_0_0_2px_#e1e1e1]`}>修复绿色项<br />目中的错误</button>
          <span className="pointer-events-none absolute top-0 left-[43px] h-[54px] w-[181px] border border-[#fb3b3b]" />
        </div>
      </div>
      <div className="w-[5px] border-x border-[#dcdcdc] bg-white" />
    </section>
  );
}

function Canvas() {
  const nav = "flex h-[14px] w-[18px] items-center justify-center border-r border-b border-[#a0a0a0] bg-[#f0f0f0]";
  const arrows = [
    ["第一页", "M1 0v9M7 1 4 4.500 7 8z"],
    ["上一页", "M7 1 3 4.500 7 8z"],
    ["下一页", "M2 1l4 3.500L2 8z"],
    ["最后一页", "M8 0v9M2 1l3 3.500L2 8z"],
  ];
  return (
    <main className="flex min-w-0 flex-1 flex-col border-t border-[#696969] bg-black">
      <div className="min-h-0 flex-1 overflow-hidden">
        <svg viewBox="611 73 553 654" preserveAspectRatio="xMinYMin" className="h-[654px] w-[553px]" shapeRendering="crispEdges" role="img" aria-label="房屋平面图">
          <path d={PLAN_SOLID} fill="#ff00ff" />
          <path d={PLAN_OUTLINE} fill="none" stroke="#ff00ff" strokeWidth="1" transform="translate(.5 .5)" />
        </svg>
      </div>
      <div className="flex h-[15px] shrink-0 bg-[#f0f0f0]">
        {arrows.map(([label, d]) => (
          <button type="button" aria-label={label} key={label} className={nav}>
            <svg viewBox="0 0 9 9" className="size-[9px]" aria-hidden="true">
              <path d={d} fill="#000" stroke="#000" strokeWidth="1" />
            </svg>
          </button>
        ))}
        <div className="relative ml-[3px] flex h-[14px] w-[96px] items-center text-[12px] leading-[14px]">
          <svg viewBox="0 0 96 14" className="absolute inset-0 h-full w-full" aria-hidden="true">
            <path d="M38 0h55l-4 13.500H42z" fill="#fff" />
            <path d="M93 0l-4 13.500H40" fill="none" stroke="#000" />
            <path d="M1 0h38l-4 14H6z" fill="#000" />
            <path d="M38 0l-4 14M38 3l3 11" stroke="#ddd" fill="none" />
          </svg>
          <button type="button" className="relative ml-2 text-white">模型</button>
          <button type="button" className="relative ml-3 font-[Liberation_Mono,monospace] text-[10px]">Layout1</button>
        </div>
      </div>
    </main>
  );
}

function CommandWindow() {
  return (
    <section className="flex h-[94px] shrink-0 flex-col bg-[#f0f0f0] font-[Liberation_Mono,Noto_Sans_CJK_SC,monospace] text-[14px]">
      <div className="h-[6px] shrink-0 border-t border-b-2 border-t-[#a0a0a0] border-b-[#808080] bg-[#fcfcfc]" />
      <div className="flex min-h-0 flex-1 pt-[5px]">
        <div className="flex w-4 justify-end pt-[3px] pr-[3px] pb-[5px]">
          <span className="w-[3px] border-x border-l-white border-r-[#a0a0a0]" />
          <span className="ml-px w-[3px] border-x border-b border-l-white border-r-[#a0a0a0] border-b-[#a0a0a0]" />
        </div>
        <div className="mb-[3px] flex min-w-0 flex-1 flex-col border-t-2 border-l border-[#696969] bg-white">
          <div className="h-16 shrink-0 border-b border-[#a0a0a0] leading-[13px]">
            <p>天空CAD插件平台&gt;&gt;&gt;正在输出报告...12/13</p>
            <p>天空CAD插件平台&gt;&gt;&gt;正在输出报告...13/13</p>
            <p>SkyEngine&gt;&gt;&gt;房屋属性检查完成...</p>
            <p>命令:</p>
          </div>
          <div className="flex h-[15px] items-center leading-[15px]">
            <label htmlFor="command">命令:</label>
            <input id="command" className="ml-2 h-[14px] min-w-0 flex-1 bg-transparent outline-none" />
          </div>
        </div>
      </div>
    </section>
  );
}

const MODES = [
  ["捕捉", false], ["栅格", false], ["正交", false], ["极轴", false], ["对象捕捉", true],
  ["对象追踪", false], ["DYN", false], ["线宽", true], ["模型", true],
];

function StatusBar() {
  return (
    <footer className="flex h-[25px] shrink-0 items-center border-t border-b border-t-[#a0a0a0] border-b-[#16222c] bg-[#f0f0f0] pt-1 text-[12px] leading-4 whitespace-nowrap">
      <span className="ml-[6px]">比例</span>
      <span className="ml-3">未定义</span>
      <output className="ml-[6px] h-[18px] w-[250px] border border-[#a0a0a0] pl-px font-[Liberation_Mono,monospace] text-[10px]">
        4.0373E+07, 3755464.3577, 0.0000
      </output>
      <div className="ml-1 flex gap-1">
        {MODES.map(([m, on]) => (
          <button
            type="button"
            key={m}
            aria-pressed={on}
            className={
              on
                ? "h-[18px] border border-t-black border-r-white border-b-white border-l-black px-px"
                : m === "DYN"
                ? "h-[18px] border border-t-white border-r-[#909090] border-b-[#909090] border-l-white font-[Liberation_Mono,monospace] text-[11px]"
                : "h-[18px] border border-t-white border-r-[#909090] border-b-[#909090] border-l-white px-px"
            }
          >
            {m}
          </button>
        ))}
      </div>
    </footer>
  );
}

function Annotations() {
  return (
    <svg viewBox="0 72 610 670" className="pointer-events-none absolute top-0 left-0 h-[670px] w-[610px]" aria-hidden="true">
      <path d="M233.500 476.500 280.500 396.500 276.500 393 298 380 294 405 289 402.500z" fill="#fb3b3b" />
      <path d="M403 604 474.500 659 479.500 655.500 490 678 465.500 670.500 469.500 667z" fill="#fb3b3b" />
    </svg>
  );
}

export default function App() {
  return (
    <div className="flex h-screen min-h-[600px] flex-col overflow-hidden bg-[#f0f0f0] font-[Noto_Sans,Noto_Sans_CJK_SC,sans-serif] text-black">
      <TitleBar />
      <MenuBar />
      <Toolbar />
      <div className="relative flex min-h-0 flex-1">
        <PluginPanel />
        <CheckPanel />
        <Canvas />
        <Annotations />
      </div>
      <CommandWindow />
      <StatusBar />
    </div>
  );
}
